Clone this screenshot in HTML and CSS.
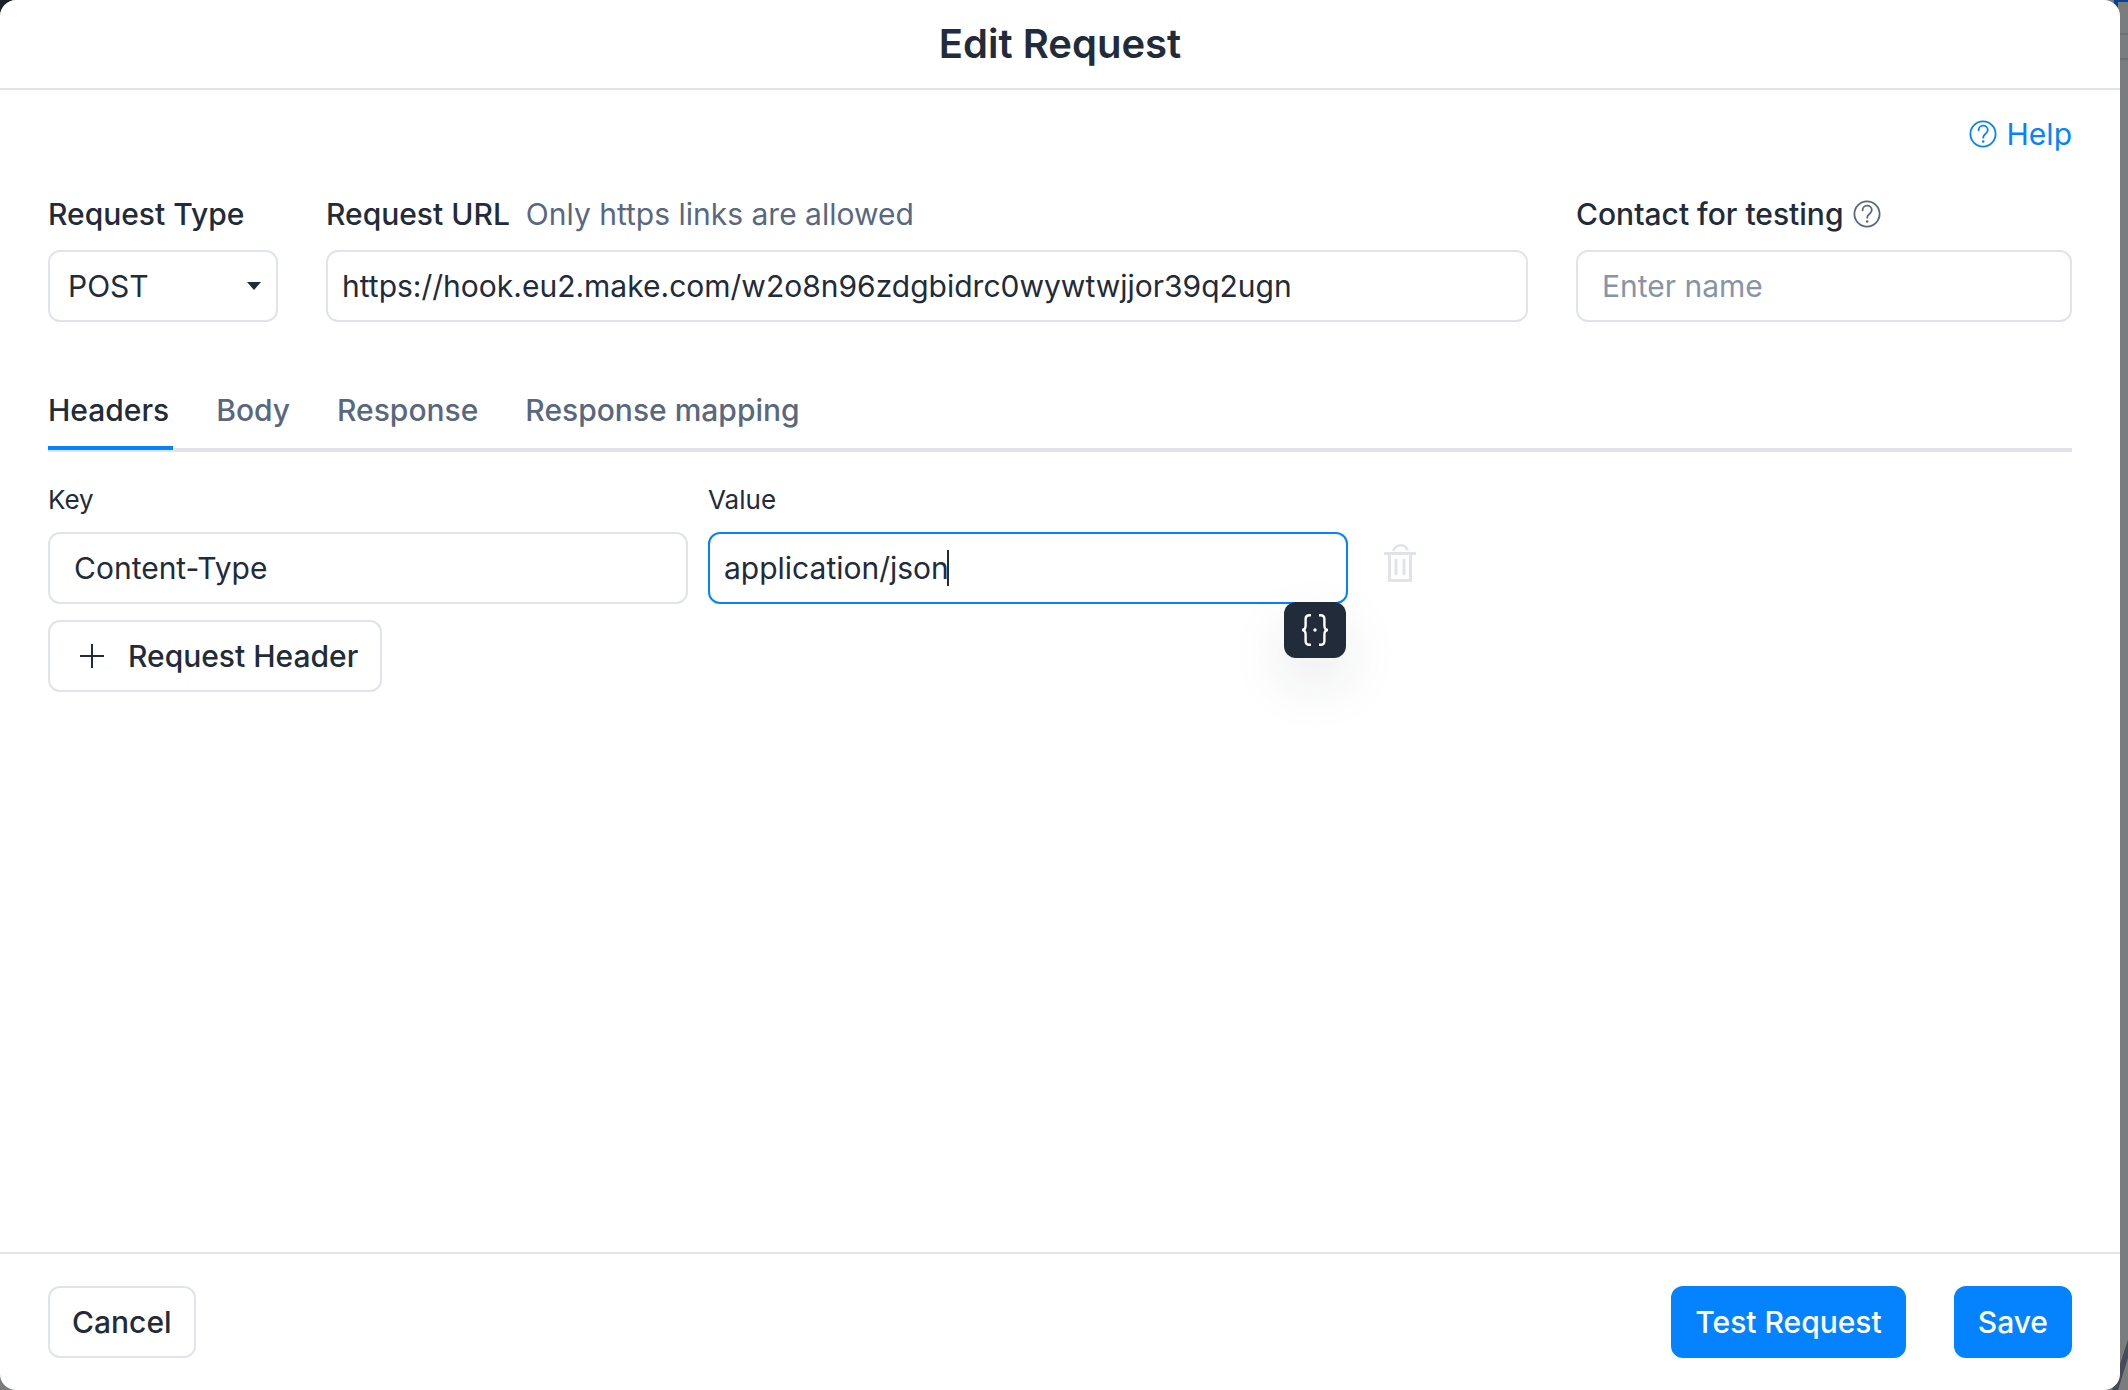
FILE: index.html
```html
<!DOCTYPE html>
<html lang="en">
<head>
<meta charset="utf-8">
<title>Edit Request</title>
<link rel="stylesheet" href="styles.css">
</head>
<body>
<svg class="sprite" aria-hidden="true">
  <symbol id="icon-help" viewBox="0 0 28 28">
    <circle cx="14" cy="14" r="12.6" fill="none" stroke="currentColor" stroke-width="1.8"/>
    <path d="M9.6 10.400a4.600 4.600 0 0 1 9.200-.3c0 2.100-1.500 3.100-2.700 4.200-1.200 1-1.900 1.700-1.900 3.400" fill="none" stroke="currentColor" stroke-width="1.8" stroke-linecap="round"/>
    <circle cx="14.200" cy="21.500" r="1.300" fill="currentColor"/>
  </symbol>
</svg>
<div class="backdrop">
  <svg class="edge edge-bottom" viewBox="0 0 24 70" aria-hidden="true"><path d="M24 20L16 44V50L8 70H14L24 38Z" fill="#444c58"/></svg>
  <svg class="edge edge-top" viewBox="0 0 14 62" aria-hidden="true"><path d="M0 0H14V2H4V8L0 4Z" fill="#05458f"/><path d="M4 34H14M4 59H14" stroke="#6e6f71" stroke-width="2"/></svg>
  <div class="edge edge-left"></div>
  <main class="modal" role="dialog" aria-labelledby="title">
    <header class="modal-header"><h1 id="title">Edit Request</h1></header>
    <form class="modal-body">
      <div class="help-row">
        <a class="help" href="#help"><svg class="icon-round"><use href="#icon-help"/></svg>Help</a>
      </div>
      <div class="request">
        <div class="field">
          <label for="type">Request Type</label>
          <div class="select-box">
            <select id="type" class="control"><option>POST</option><option>GET</option></select>
            <svg class="caret" viewBox="0 0 14 8" aria-hidden="true"><path d="M0 0H14L7 8Z" fill="currentColor"/></svg>
          </div>
        </div>
        <div class="field">
          <div class="label-row"><label for="url">Request URL</label><span class="hint">Only https links are allowed</span></div>
          <input id="url" class="control tight" type="text" value="https://hook.eu2.make.com/w2o8n96zdgbidrc0wywtwjjor39q2ugn">
        </div>
        <div class="field">
          <div class="label-row label-icon"><label for="contact">Contact for testing</label><svg class="icon-round muted"><use href="#icon-help"/></svg></div>
          <input id="contact" class="control" type="text" placeholder="Enter name">
        </div>
      </div>
      <nav class="tabs">
        <a class="tab active" href="#headers">Headers</a>
        <a class="tab" href="#body">Body</a>
        <a class="tab" href="#response">Response</a>
        <a class="tab" href="#mapping">Response mapping</a>
      </nav>
      <div class="pairs">
        <div class="field pair">
          <label class="small" for="key">Key</label>
          <input id="key" class="control" type="text" value="Content-Type">
        </div>
        <div class="field pair">
          <label class="small" for="value">Value</label>
          <div class="value-box">
            <input id="value" class="control tight focused" type="text" value="application/json">
            <span class="text-cursor" aria-hidden="true"></span>
            <button class="braces" type="button" aria-label="Insert variable">
              <svg viewBox="0 0 28 32" fill="none" stroke="currentColor" stroke-width="2.400"><path d="M10 1.200H8.500Q4.600 1.200 4.600 5V11.500Q4.600 16 1 16Q4.600 16 4.600 20.500V27Q4.600 30.800 8.500 30.800H10M18 1.200H19.500Q23.400 1.200 23.400 5V11.500Q23.400 16 27 16Q23.400 16 23.400 20.500V27Q23.400 30.800 19.500 30.800H18"/><circle cx="14" cy="16" r="1.700" fill="currentColor" stroke="none"/></svg>
            </button>
          </div>
        </div>
        <button class="trash" type="button" aria-label="Delete header">
          <svg viewBox="0 0 32 38" fill="none" stroke="currentColor"><path d="M0 9.500H32" stroke-width="3"/><path d="M9 7Q12 1.300 17 1.300Q22 1.300 23.500 6.500" stroke-width="2.600"/><path d="M5.500 10V36.500H26.500V10" stroke-width="3"/><path d="M12 15V31M20 15V31" stroke-width="3"/></svg>
        </button>
      </div>
      <button class="btn add" type="button"><svg viewBox="0 0 24 24" stroke="currentColor" stroke-width="2"><path d="M12 0V24M0 12H24"/></svg>Request Header</button>
    </form>
    <footer class="modal-footer">
      <button class="btn" type="button">Cancel</button>
      <div class="actions">
        <button class="btn primary" type="button">Test Request</button>
        <button class="btn primary" type="button">Save</button>
      </div>
    </footer>
  </main>
</div>
</body>
</html>
```
FILE: styles.css
```css
* { box-sizing: border-box; }
body {
  margin: 0;
  font-family: Inter, "Liberation Sans", sans-serif;
  font-size: 30px;
  line-height: 40px;
  color: #222b39;
}
.sprite { position: absolute; width: 0; height: 0; }
.backdrop {
  position: relative;
  min-height: 100vh;
  padding-right: 8px;
  display: flex;
  background: #7b7c7e;
  overflow: hidden;
}
.edge { position: absolute; }
.edge-top { top: 0; right: 0; width: 14px; height: 62px; }
.edge-left { top: 0; left: 0; width: 12px; height: 12px; background: #1b2029; }
.edge-bottom { right: 0; bottom: 0; width: 24px; height: 70px; }
.modal {
  position: relative;
  flex: 1;
  display: flex;
  flex-direction: column;
  background: #fff;
  border-radius: 16px;
}
.modal-header { padding: 24px; text-align: center; border-bottom: 2px solid #e0e4e9; }
h1 { margin: 0; font-size: 40px; line-height: 40px; font-weight: 600; }
.modal-body { flex: 1; padding: 24px 48px; }
.help-row { display: flex; justify-content: flex-end; }
.help { display: flex; align-items: center; gap: 10px; color: #0583ff; text-decoration: none; }
.icon-round { width: 28px; height: 28px; }
.muted { color: #59677f; }
.request {
  display: grid;
  grid-template-columns: 230px 1202fr 496fr;
  gap: 48px;
  margin-top: 40px;
}
.field { display: flex; flex-direction: column; gap: 16px; min-width: 0; }
label { font-weight: 500; }
.label-row { display: flex; align-items: center; gap: 16px; }
.label-icon { gap: 10px; }
.hint { color: #59677f; }
.control {
  display: block;
  width: 100%;
  height: 72px;
  padding: 0 24px;
  border: 2px solid #e0e4e9;
  border-radius: 12px;
  background: #fff;
  color: inherit;
  font: inherit;
  outline: none;
}
.control::placeholder { color: #8794a8; opacity: 1; }
.tight { padding: 0 14px; }
.select-box, .value-box { position: relative; }
select.control { appearance: none; padding: 0 18px; }
.caret { position: absolute; right: 17px; top: 32px; width: 14px; height: 8px; pointer-events: none; }
.focused { border-color: #0583ff; }
.tabs { display: flex; gap: 43px; margin-top: 68px; border-bottom: 4px solid #e0e3e9; }
.tab {
  padding: 0 4px 16px 0;
  margin-bottom: -2px;
  border-bottom: 4px solid transparent;
  color: #59677f;
  font-weight: 500;
  text-decoration: none;
}
.tab.active { color: #222b39; border-color: #0583ff; }
.pairs {
  display: grid;
  grid-template-columns: 640fr 640fr 704fr;
  gap: 20px;
  margin-top: 28px;
}
.pair { gap: 12px; }
.small { font-size: 26px; font-weight: 400; }
.text-cursor { position: absolute; left: 239px; top: 18px; width: 2px; height: 36px; background: #222b39; }
.braces {
  position: absolute;
  right: 2px;
  top: 70px;
  width: 62px;
  height: 56px;
  padding: 12px 17px;
  border: 0;
  border-radius: 12px;
  background: #222b39;
  color: #fff;
  box-shadow: 0 24px 56px rgba(34, 43, 57, 0.1);
}
.braces svg, .trash svg { display: block; width: 100%; height: 100%; }
.trash {
  align-self: end;
  width: 32px;
  height: 38px;
  margin: 0 0 22px 16px;
  padding: 0;
  border: 0;
  background: none;
  color: #e0e4e9;
}
.btn {
  height: 72px;
  padding: 0 22px;
  border: 2px solid #e0e4e9;
  border-radius: 12px;
  background: #fff;
  color: inherit;
  font: inherit;
  font-weight: 500;
}
.add { display: flex; align-items: center; gap: 24px; margin-top: 16px; padding-left: 30px; }
.add svg { width: 24px; height: 24px; }
.modal-footer {
  display: flex;
  justify-content: space-between;
  padding: 32px 48px;
  border-top: 2px solid #e0e4e9;
}
.actions { display: flex; gap: 48px; }
.primary { background: #0583ff; border-color: #0583ff; color: #fff; }
```
